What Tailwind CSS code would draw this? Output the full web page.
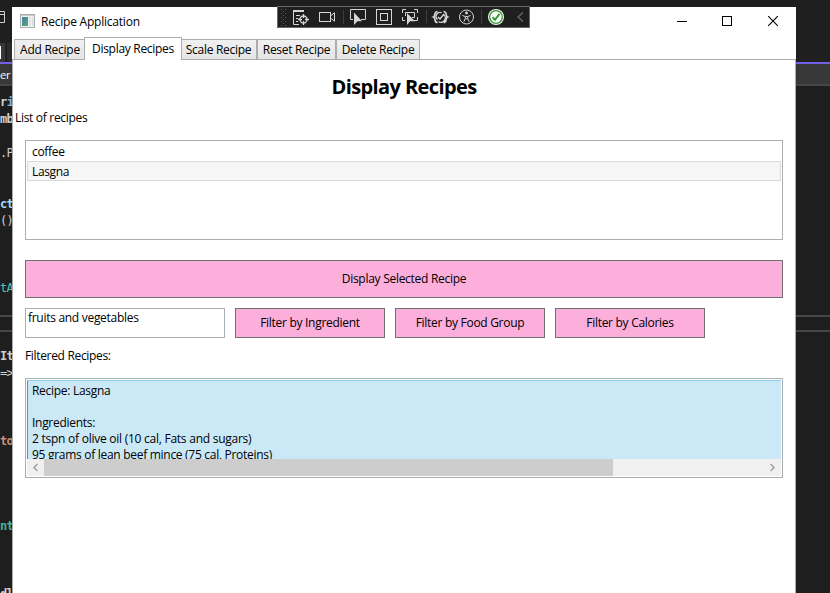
<!DOCTYPE html>
<html lang="en">
<head>
<meta charset="utf-8">
<title>Recipe Application</title>
<script src="https://cdn.jsdelivr.net/npm/@tailwindcss/browser@4"></script>
</head>
<body class="w-[830px] h-[593px] overflow-hidden bg-[#1e1e1e] text-black text-[12px] leading-[16px] font-['Open_Sans','Noto_Sans',sans-serif]">
<div class="relative flex w-[830px] h-[593px] overflow-hidden">

  <!-- editor, left edge -->
  <aside class="relative w-3 h-full shrink-0 overflow-hidden bg-[#1e1e1e] flex flex-col">
    <div class="h-[43px] shrink-0 bg-[#1f1f1f] pt-[11px]">
      <svg class="block" width="12" height="12" viewBox="0 0 12 12" fill="none" stroke="#d0d0d0"><path d="M0 .5H4.5V11.5H0M0 3.5H4.5"/></svg>
    </div>
    <div class="h-[19px] shrink-0 bg-[#2b2b2b] flex">
      <div class="w-[5px] bg-[#383838] pt-[3px]"><div class="w-px h-[13px] bg-white"></div></div>
      <div class="w-[2px] bg-[#1f1f1f]"></div>
    </div>
    <div class="h-[2px] shrink-0 bg-[#7160e8]"></div>
    <div class="h-[20px] shrink-0 bg-[#383838] text-white leading-[22px] text-[11px] tracking-[-0.3px]">er</div>
    <div class="h-[2px] shrink-0 bg-[#464646]"></div>
    <pre class="mt-[8px] text-[12px] leading-[16.95px] font-['DejaVu_Sans_Mono',monospace] text-[#cfcfcf] tracking-[-0.6px]"><b>r</b><b class="text-[#7fb8dc]">i</b>
<b>mb</b>

.P


<b class="text-[#9cdcfe]">ct</b>
()



<span class="text-[#4ec9b0]">tA</span>



<b>It</b>
=&gt;



<b class="text-[#c98f78]">to</b>




<b class="text-[#43b39d]">nt</b>



<b>dl</b></pre>
    <div class="absolute left-0 top-[315px] w-3 h-[17px] border-y-2 border-[#464646]"></div>
  </aside>

  <!-- application window -->
  <main class="mt-[7px] w-[784px] h-[586px] shrink-0 bg-white flex flex-col">
    <header class="h-[31px] shrink-0 flex items-center pl-2">
      <svg class="block -mt-[3px]" width="15" height="14" viewBox="0 0 15 14"><defs><linearGradient id="g" x1="0" y1="0" x2="1" y2="1"><stop stop-color="#4d7faa"/><stop offset="1" stop-color="#4fa871"/></linearGradient></defs><rect x=".5" y=".5" width="14" height="13" fill="#f2f2f2" stroke="#a9adb0"/><path d="M1 1.5H14" stroke="#c8ccd0"/><rect x="2" y="3" width="6" height="9" fill="url(#g)"/><path d="M9 3h2v9H9z" fill="#dfe3e6"/><path d="M12 3h1.500v9H12z" fill="#d4e0e6"/></svg>
      <span class="ml-[6px] -mt-[2px] whitespace-nowrap tracking-[-0.22px]">Recipe Application</span>
      <svg class="block ml-auto mr-4 -mt-[3px]" width="103" height="12" viewBox="0 0 103 12" fill="none" stroke="#000"><path d="M0 6.500H10"/><rect x="45.500" y="1.500" width="9" height="9"/><path d="M91.200 1.200L100.800 10.800M100.800 1.200L91.200 10.800" stroke-width="1.1"/></svg>
    </header>
    <nav class="relative z-10 h-[22px] shrink-0 flex items-end pl-[2px] whitespace-nowrap text-center">
      <div class="w-[71px] h-[21px] border border-[#acacac] bg-linear-to-b from-[#f0f0f0] to-[#e5e5e5] pl-px leading-[20px] tracking-[-0.25px]">Add Recipe</div>
      <div class="relative -ml-px w-[98px] h-[23px] border border-b-0 border-[#acacac] bg-white leading-[22px] tracking-[-0.3px]">Display Recipes</div>
      <div class="-ml-px w-[76px] h-[21px] border border-[#acacac] bg-linear-to-b from-[#f0f0f0] to-[#e5e5e5] pr-px leading-[20px] tracking-[-0.3px]">Scale Recipe</div>
      <div class="w-[79px] h-[21px] border border-[#acacac] bg-linear-to-b from-[#f0f0f0] to-[#e5e5e5] leading-[20px] tracking-[-0.3px]">Reset Recipe</div>
      <div class="w-[84px] h-[21px] border border-[#acacac] bg-linear-to-b from-[#f0f0f0] to-[#e5e5e5] leading-[20px] tracking-[-0.28px]">Delete Recipe</div>
    </nav>
    <section class="-mt-px grow border border-b-0 border-[#acacac] flex flex-col whitespace-nowrap">
      <h1 class="mt-[13px] h-[28px] leading-[28px] text-center text-[20px] font-bold tracking-[-0.6px]">Display Recipes</h1>
      <p class="mt-[9px] ml-[2px] tracking-[-0.31px]">List of recipes</p>
      <div class="mt-[14px] mx-3 h-[100px] border border-[#abadb3] p-px">
        <div class="h-[19px] pl-[5px] leading-[20px] tracking-[-0.3px]">coffee</div>
        <div class="h-[20px] pl-1 border border-[#dadada] bg-[#f6f6f6] leading-[20px] tracking-[-0.35px]">Lasgna</div>
      </div>
      <button class="mt-5 mx-3 h-[38px] border border-[#707070] bg-[#fcafda] leading-[36px] tracking-[-0.28px]">Display Selected Recipe</button>
      <div class="mt-[10px] ml-3 flex gap-[10px] tracking-[-0.29px]">
        <div class="w-[200px] h-[30px] border border-[#abadb3] pl-[2px] leading-[17px]">fruits and vegetables</div>
        <button class="w-[150px] h-[30px] border border-[#707070] bg-[#fcafda]">Filter by Ingredient</button>
        <button class="w-[150px] h-[30px] border border-[#707070] bg-[#fcafda]">Filter by Food Group</button>
        <button class="w-[150px] h-[30px] border border-[#707070] bg-[#fcafda]">Filter by Calories</button>
      </div>
      <p class="mt-[10px] ml-3 tracking-[-0.33px]">Filtered Recipes:</p>
      <div class="mt-[14px] mx-3 h-[100px] border border-[#abadb3] p-px">
        <div class="h-[79px] overflow-hidden border-l border-t border-l-[#26a0da] border-t-[#8ccff0] bg-[#cbe8f6] pl-1 pt-[2px] tracking-[-0.29px]">
          <p>Recipe: Lasgna</p>
          <p class="h-4"></p>
          <p>Ingredients:</p>
          <p class="tracking-[-0.25px]">2 tspn of olive oil (10 cal, Fats and sugars)</p>
          <p>95 grams of lean beef mince (75 cal, Proteins)</p>
        </div>
        <div class="h-[17px] flex bg-[#f0f0f0]">
          <svg class="block" width="17" height="17" viewBox="0 0 17 17" fill="none" stroke="#a3a3a3" stroke-width="1.600"><path d="M10.500 5L7 8.500L10.500 12"/></svg>
          <div class="w-[569px] bg-[#cdcdcd]"></div>
          <svg class="block ml-auto" width="17" height="17" viewBox="0 0 17 17" fill="none" stroke="#a3a3a3" stroke-width="1.600"><path d="M6.500 5L10 8.500L6.500 12"/></svg>
        </div>
      </div>
    </section>
  </main>

  <!-- editor, right edge -->
  <aside class="grow h-full bg-[#1e1e1e] flex flex-col">
    <div class="h-[62px] shrink-0 bg-[#1f1f1f]"></div>
    <div class="h-[2px] shrink-0 bg-[#7160e8]"></div>
    <div class="h-[20px] shrink-0 bg-[#383838]"></div>
    <div class="h-[2px] shrink-0 bg-[#464646]"></div>
    <div class="mt-[229px] h-[17px] border-y-2 border-[#464646]"></div>
  </aside>

  <!-- floating debug toolbar -->
  <div class="absolute z-20 left-[277px] top-[6px] w-[253px] h-[22px] border border-[#686868] bg-[#1f1f1f]">
    <svg class="block" width="251" height="20" viewBox="278 7 251 20" fill="none" stroke="#d6d6d6">
      <g stroke="#5a5a5a" stroke-dasharray="1 3"><path d="M281.500 9V26M285.500 9V26"/><path d="M283.500 11V26"/></g>
      <path d="M343.500 10V24M426.500 10V24M481.500 10V24" stroke="#3d3d3d"/>
      <path d="M293 10H304V12H293Z" fill="#d6d6d6" stroke="none"/><path d="M293.500 10V24.500H299M296 15.500H300M296 18.500H298M296 21.500H298"/>
      <circle cx="303.500" cy="19.500" r="3.500" stroke-width="1.300"/><path d="M303.500 14V18M303.500 21V25M298 19.500H302M305 19.500H309" stroke-width="1.300"/>
      <rect x="319.500" y="12.500" width="11" height="9"/><path d="M331 15.500L334.500 12.800V21.200L331 18.500"/>
      <path d="M353 19.500H350.500V9.500H365.500V19.500H361"/>
      <path d="M354 12.500V25L357.500 21.200H362Z" fill="#d6d6d6" stroke="none"/>
      <rect x="376.500" y="9.500" width="15" height="15"/><rect x="380.500" y="13.500" width="7" height="7"/>
      <path d="M402.500 13V9.500H406M414 9.500H417.500V13M402.500 17V20.500H405M417.500 17V20.500H414M405.500 16V12.500H414.500V17.500H412"/>
      <path d="M407 13V25L410 21.200H415Z" fill="#d6d6d6" stroke="none"/>
      <path d="M437.500 11.500C433.500 11.500 436 16 433.500 17C436 18 433.500 22.500 437.500 22.500M443.500 11.500C447.500 11.500 445 16 447.500 17C445 18 447.500 22.500 443.500 22.500" stroke-width="1.700"/>
      <path d="M437.500 19.500A4 4 0 0 1 441.500 12.700M443.500 14.500A4 4 0 0 1 438.500 21.500M438 17L440 19L444 14" stroke-width="1.400"/>
      <circle cx="466.500" cy="17" r="7"/><circle cx="466.500" cy="13" r="1.400" fill="#d6d6d6" stroke="none"/><path d="M462.500 15.500L465.300 16.500V18.500L463.800 21.800M470.500 15.500L467.700 16.500V18.500L469.200 21.800M465.300 16.500H467.700M465.300 18.800H467.700"/>
      <circle cx="496" cy="17" r="8" fill="#f5f5f5" stroke="none"/><circle cx="496" cy="17" r="6.300" fill="#fff" stroke="#339933" stroke-width="1.300"/><path d="M492.500 17.200L495 19.800L499.500 13.800" stroke="#339933" stroke-width="2"/>
      <path d="M523 12.500L518 17L523 21.500" stroke="#6c6c6c" stroke-width="1.200"/>
    </svg>
  </div>
</div>
</body>
</html>
